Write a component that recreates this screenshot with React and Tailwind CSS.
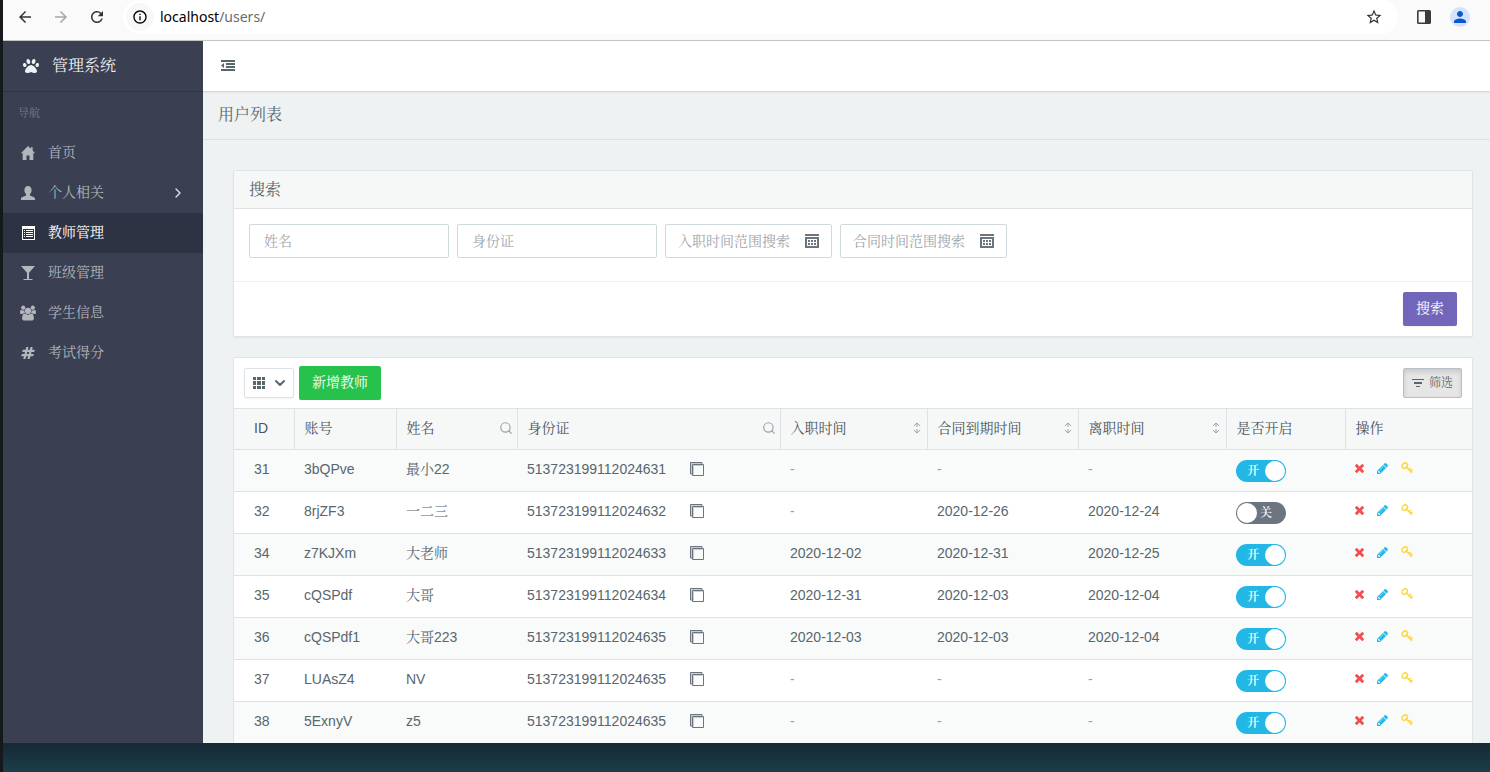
import { useState } from 'react';
import { MdArrowBack, MdArrowForward, MdRefresh, MdInfoOutline, MdStarBorder, MdPerson } from 'react-icons/md';
import { FaPaw } from 'react-icons/fa';
import { FiSearch, FiChevronDown, FiChevronRight } from 'react-icons/fi';

function HomeIcon() {
  return (
    <svg width="16" height="16" viewBox="0 0 16 16" fill="currentColor">
      <path d="M8 1L.8 8.300h1.900V15h3.800v-4.500h3V15h3.800V8.300h1.900L12.700 5.700V2.300h-1.900v1.500z" />
    </svg>
  );
}

function UserIcon() {
  return (
    <svg width="16" height="16" viewBox="0 0 16 16" fill="currentColor">
      <path d="M8 1C5.700 1 4.400 2.700 4.400 5c0 1.800.7 3.200 1.700 4.200v1.300L2 12.200c-.8.4-1 .9-1 1.600V15h14v-1.200c0-.7-.3-1.200-1-1.600l-4.100-1.700V9.200c1-1 1.700-2.400 1.700-4.200C11.600 2.700 10.300 1 8 1z" />
    </svg>
  );
}

function ListIcon() {
  return (
    <svg width="16" height="16" viewBox="0 0 16 16" fill="currentColor">
      <path fillRule="evenodd" d="M2 1h13v14H2zM3 4v10h11V4z" />
      <path d="M4 5h1v1H4zM6 5h7v1H6zM4 7h1v1H4zM6 7h7v1H6zM4 9h1v1H4zM6 9h7v1H6zM4 11h1v1H4zM6 11h7v1H6z" />
    </svg>
  );
}

function GlassIcon() {
  return (
    <svg width="16" height="16" viewBox="0 0 16 16" fill="currentColor">
      <path d="M1 1h14L9 7.800V14h3.500v1h-9v-1H7V7.800z" />
    </svg>
  );
}

function UsersIcon() {
  return (
    <svg width="16" height="16" viewBox="0 0 1920 1792" fill="currentColor">
      <path d="M593 896q-162 5-265 128H194q-82 0-138-40.500T0 865q0-353 124-353 6 0 43.500 21t97.500 42.500T384 597q67 0 133-23-5 37-5 66 0 139 81 256zm1071 637q0 120-73 189.500t-194 69.500H523q-121 0-194-69.500T256 1533q0-53 3.500-103.500t14-109T300 1212t43-97.500 62-81 85.500-53.500T602 960q10 0 43 21.500t73 48 107 48 135 21.500 135-21.500 107-48 73-48 43-21.500q61 0 111.500 20t85.500 53.500 62 81 43 97.500 26.500 108.500 14 109 3.500 103.500zM640 256q0 106-75 181t-181 75-181-75-75-181 75-181T384 0t181 75 75 181zm704 384q0 159-112.500 271.500T960 1024 688.500 911.500 576 640t112.500-271.500T960 256t271.500 112.500T1344 640zm576 225q0 78-56 118.500t-138 40.500h-134q-103-123-265-128 81-117 81-256 0-29-5-66 66 23 133 23 59 0 119-21.500t97.500-42.500 43.500-21q124 0 124 353zm-128-609q0 106-75 181t-181 75-181-75-75-181 75-181 181-75 181 75 75 181z" />
    </svg>
  );
}

function HashIcon() {
  return (
    <svg width="16" height="14" viewBox="0 0 1728 1792" fill="currentColor">
      <path d="M959 1024l64-256H769l-64 256h254zm768-504l-56 224q-7 24-31 24h-327l-64 256h311q15 0 25 12 10 14 6 28l-56 224q-5 24-31 24h-327l-81 328q-7 24-31 24H841q-16 0-26-12-9-12-6-28l78-312H633l-81 328q-7 24-31 24H296q-15 0-25-12-9-12-6-28l78-312H32q-15 0-25-12-9-12-6-28l56-224q7-24 31-24h327l64-256H168q-15 0-25-12-10-14-6-28l56-224q5-24 31-24h327l81-328q7-24 32-24h224q15 0 25 12 9 12 6 28l-78 312h254l81-328q7-24 32-24h224q15 0 25 12 9 12 6 28l-78 312h311q15 0 25 12 9 12 6 28z" />
    </svg>
  );
}

function OutdentIcon() {
  return (
    <svg width="14" height="12" viewBox="0 0 14 12" fill="currentColor">
      <path d="M0 0h14v2H0zM5 3h9v2H5zM5 6h9v2H5zM0 9h14v2H0zM3 3v5L0 5.500z" />
    </svg>
  );
}

function CalendarIcon() {
  return (
    <svg width="14" height="14" viewBox="0 0 14 14" fill="currentColor">
      <path d="M0 0h14v2H0z" />
      <path fillRule="evenodd" d="M0 3h14v11H0zM2 5v7h10V5z" />
      <path d="M3 6h2v2H3zM6 6h2v2H6zM9 6h2v2H9zM3 9h2v2H3zM6 9h2v2H6zM9 9h2v2H9z" />
    </svg>
  );
}

function GridIcon() {
  return (
    <svg width="12" height="12" viewBox="0 0 12 12" fill="currentColor">
      <path d="M0 0h3v3H0zM4 0h4v3H4zM9 0h3v3H9zM0 4h3v4H0zM4 4h4v4H4zM9 4h3v4H9zM0 9h3v3H0zM4 9h4v3H4zM9 9h3v3H9z" />
    </svg>
  );
}

function FilterIcon() {
  return (
    <svg width="12" height="9" viewBox="0 0 12 9" fill="currentColor">
      <path d="M0 0h12v1H0zM2 3h8v2H2zM4 7h4v1H4z" />
    </svg>
  );
}

function SortIcon() {
  return (
    <svg width="8" height="12" viewBox="0 0 8 12" fill="none" stroke="currentColor">
      <path d="M.8 4L4 1l3.200 3M4 1.500V5M.8 8L4 11l3.200-3M4 7v3.500" />
    </svg>
  );
}

function CopyIcon() {
  return (
    <svg width="14" height="14" viewBox="0 0 14 14" fill="none" stroke="currentColor">
      <path d="M12 2.500V.5H.5V12h2" />
      <path d="M2.500 2.500h11v11h-11z" />
      <path d="M1.500 11.500v-10h10M3.500 12.500v-9h9" opacity=".35" />
    </svg>
  );
}

function TimesIcon() {
  return (
    <svg width="9" height="9" viewBox="110 366 1188 1188" fill="currentColor">
      <path d="M1298 1322q0 40-28 68l-136 136q-28 28-68 28t-68-28L704 1232l-294 294q-28 28-68 28t-68-28l-136-136q-28-28-28-68t28-68l294-294-294-294q-28-28-28-68t28-68l136-136q28-28 68-28t68 28l294 294 294-294q28-28 68-28t68 28l136 136q28 28 28 68t-28 68l-294 294 294 294q28 28 28 68z" />
    </svg>
  );
}

function PencilIcon() {
  return (
    <svg width="11" height="11" viewBox="0 144 1520 1520" fill="currentColor">
      <path d="M363 1536l91-91-235-235-91 91v107h128v128h107zm523-928q0-22-22-22-10 0-17 7l-542 542q-7 7-7 17 0 22 22 22 10 0 17-7l542-542q7-7 7-17zm-54-192l416 416-832 832H0v-416zm683 96q0 53-37 90l-166 166-416-416 166-165q36-38 90-38 53 0 91 38l235 234q37 39 37 91z" />
    </svg>
  );
}

function KeyIcon() {
  return (
    <svg width="12" height="12" viewBox="0 0 12 12" fill="none" stroke="currentColor" strokeWidth="1.400">
      <ellipse cx="3.700" cy="3.600" rx="3" ry="2.300" transform="rotate(-40 3.700 3.600)" />
      <path d="M5.500 5.200L11 10.800M8 7.800l1.800-1.700M9.700 9.400l1.800-1.700" />
    </svg>
  );
}

function SidePanelIcon() {
  return (
    <svg width="16" height="16" viewBox="0 0 16 16" fill="#3c3c3c">
      <path fillRule="evenodd" d="M2.500 1h11A1.500 1.500 0 0 1 15 2.500v11a1.500 1.500 0 0 1-1.500 1.500h-11A1.500 1.500 0 0 1 1 13.500v-11A1.500 1.500 0 0 1 2.500 1zM2.600 2.600v10.800H9V2.600z" />
    </svg>
  );
}

const menu = [
  { label: '首页', Icon: HomeIcon },
  { label: '个人相关', Icon: UserIcon, children: true },
  { label: '教师管理', Icon: ListIcon, active: true },
  { label: '班级管理', Icon: GlassIcon },
  { label: '学生信息', Icon: UsersIcon },
  { label: '考试得分', Icon: HashIcon },
];

const columns = [
  { label: 'ID', width: 'w-[60px]' },
  { label: '账号', width: 'w-[102px]' },
  { label: '姓名', width: 'w-[121px]', search: true },
  { label: '身份证', width: 'w-[263px]', search: true },
  { label: '入职时间', width: 'w-[147px]', sort: true },
  { label: '合同到期时间', width: 'w-[151px]', sort: true },
  { label: '离职时间', width: 'w-[148px]', sort: true },
  { label: '是否开启', width: 'w-[119px]' },
  { label: '操作', width: 'w-auto' },
];

const teachers = [
  { id: 31, account: '3bQPve', name: '最小22', card: '513723199112024631', on: true },
  { id: 32, account: '8rjZF3', name: '一二三', card: '513723199112024632', end: '2020-12-26', leave: '2020-12-24', on: false },
  { id: 34, account: 'z7KJXm', name: '大老师', card: '513723199112024633', start: '2020-12-02', end: '2020-12-31', leave: '2020-12-25', on: true },
  { id: 35, account: 'cQSPdf', name: '大哥', card: '513723199112024634', start: '2020-12-31', end: '2020-12-03', leave: '2020-12-04', on: true },
  { id: 36, account: 'cQSPdf1', name: '大哥223', card: '513723199112024635', start: '2020-12-03', end: '2020-12-03', leave: '2020-12-04', on: true },
  { id: 37, account: 'LUAsZ4', name: 'NV', card: '513723199112024635', on: true },
  { id: 38, account: '5ExnyV', name: 'z5', card: '513723199112024635', on: true },
];

function BrowserBar() {
  return (
    <div className="flex h-[41px] shrink-0 items-center border-b border-[#c4c4c4] bg-[#fafafa] pb-[6px] pl-[13px] pr-5 text-lg text-[#333333]">
      <div className="flex gap-[18px]">
        <button aria-label="Back"><MdArrowBack /></button>
        <button aria-label="Forward" className="text-[#a6a6a6]"><MdArrowForward /></button>
        <button aria-label="Reload"><MdRefresh /></button>
      </div>
      <div className="ml-[17px] flex h-[34px] flex-1 items-center rounded-full bg-white pl-[3px] pr-[15px]">
        <span className="flex size-7 items-center justify-center rounded-full bg-[#f8f8f8] text-base text-black">
          <MdInfoOutline />
        </span>
        <span className="ml-[6px] flex-1 font-['Noto_Sans'] text-sm text-[#6b6b6b]">
          <span className="text-black">localhost</span>/users/
        </span>
        <button aria-label="Bookmark"><MdStarBorder /></button>
      </div>
      <button aria-label="Side panel" className="ml-[18px]"><SidePanelIcon /></button>
      <button aria-label="Profile" className="ml-[18px] flex size-5 items-center justify-center rounded-full bg-[#d3e3fd] text-[#0b57d0]">
        <MdPerson />
      </button>
    </div>
  );
}

function Sidebar() {
  return (
    <aside className="w-[200px] shrink-0 bg-[#3a3f51] text-[#b4b6bd]">
      <div className="flex h-[51px] items-center gap-[13px] border-b border-[#303546] pl-5 text-base text-[#f0f1f3]">
        <FaPaw className="size-4" />
        <span>管理系统</span>
      </div>
      <div className="flex h-[41px] items-center pl-[15px] pt-[2px] text-[11px] text-[#7b7f8c]">导航</div>
      <nav>
        {menu.map(({ label, Icon, active, children }) => (
          <a
            key={label}
            href="#"
            className={active
              ? 'flex h-10 items-center gap-3 bg-[#2e3344] pl-[17px] pr-[17px] text-sm text-white'
              : 'flex h-10 items-center gap-3 pl-[17px] pr-[17px] text-sm'}
          >
            <span className="flex w-4 justify-center"><Icon /></span>
            <span className="flex-1 pb-[2px]">{label}</span>
            {children && <FiChevronRight className="size-4 text-[#e0e1e4]" />}
          </a>
        ))}
      </nav>
    </aside>
  );
}

function DateRange({ placeholder }) {
  return (
    <label className="flex h-[34px] w-[167px] items-center justify-between rounded-[2px] border border-[#cfdadd] px-3 text-[#6b747f]">
      <input
        placeholder={placeholder}
        aria-label={placeholder}
        className="w-[116px] text-sm outline-none placeholder:text-[#9fa6ad]"
      />
      <CalendarIcon />
    </label>
  );
}

function SearchPanel() {
  const box = 'h-[34px] w-[200px] rounded-[2px] border border-[#cfdadd] px-[14px] text-sm outline-none placeholder:text-[#a2a8ae]';
  return (
    <form className="rounded-[2px] border border-[#dee5e7] bg-white shadow-xs" onSubmit={(e) => e.preventDefault()}>
      <h2 className="flex h-[38px] items-center border-b border-[#dee2e6] bg-[#f6f8f8] px-[15px] text-base">搜索</h2>
      <div className="flex flex-wrap gap-2 px-[15px] pb-[23px] pt-[15px]">
        <input placeholder="姓名" aria-label="姓名" className={box} />
        <input placeholder="身份证" aria-label="身份证" className={box} />
        <DateRange placeholder="入职时间范围搜索" />
        <DateRange placeholder="合同时间范围搜索" />
      </div>
      <div className="flex justify-end border-t border-[#edf1f2] px-[15px] py-[10px]">
        <button type="submit" className="h-[34px] rounded-[2px] bg-[#7266ba] px-[13px] pb-[2px] text-sm text-white shadow-xs">搜索</button>
      </div>
    </form>
  );
}

function Toggle({ id, initial }) {
  const [on, setOn] = useState(initial);
  return (
    <label className="block w-[50px] cursor-pointer font-semibold">
      <input
        type="checkbox"
        className="sr-only"
        aria-label={`是否开启 ${id}`}
        checked={on}
        onChange={() => setOn(!on)}
      />
      <span className={on
        ? 'flex h-[22px] items-center justify-end gap-[6px] rounded-full bg-[#23b7e5] p-px text-xs text-white'
        : 'flex h-[22px] flex-row-reverse items-center justify-end gap-[3px] rounded-full bg-[#6b747f] p-px text-xs text-white'}
      >
        <span>{on ? '开' : '关'}</span>
        <span className="size-5 rounded-full bg-white" />
      </span>
    </label>
  );
}

function TeacherRow({ row }) {
  const cell = 'px-[10px] pb-[3px]';
  const date = (v) => v || <span className="text-[#98a0a6]">-</span>;
  return (
    <tr className="h-[42px] border-b border-[#dee2e6] odd:bg-[#f9fafa]">
      <td className="pb-[3px] pl-5">{row.id}</td>
      <td className={cell}>{row.account}</td>
      <td className={cell}>{row.name}</td>
      <td className={cell}>
        <span className="flex items-center gap-6">
          {row.card}
          <button aria-label="复制" className="text-[#6b747f]"><CopyIcon /></button>
        </span>
      </td>
      <td className={cell}>{date(row.start)}</td>
      <td className={cell}>{date(row.end)}</td>
      <td className={cell}>{date(row.leave)}</td>
      <td className="px-[10px]"><Toggle id={row.id} initial={row.on} /></td>
      <td className="px-[10px] pb-[5px]">
        <span className="flex items-center gap-[13px]">
          <button aria-label="删除" className="text-[#f05050]"><TimesIcon /></button>
          <button aria-label="编辑" className="text-[#23b7e5]"><PencilIcon /></button>
          <button aria-label="重置密码" className="text-[#fad733]"><KeyIcon /></button>
        </span>
      </td>
    </tr>
  );
}

function TeacherPanel() {
  return (
    <section className="rounded-[2px] border border-[#dee5e7] bg-white">
      <div className="flex h-[50px] items-center gap-[5px] px-[10px]">
        <button aria-label="显示列" className="flex h-[30px] w-[50px] items-center gap-[7px] rounded-[2px] border border-[#dee2e6] pl-2 text-[#58666e] shadow-xs">
          <GridIcon />
          <FiChevronDown className="size-4" strokeWidth="3" />
        </button>
        <button className="h-[34px] rounded-[2px] bg-[#27c24c] px-[13px] pb-[2px] text-sm text-white">新增教师</button>
        <button className="ml-auto flex h-[30px] items-center gap-[5px] rounded-[2px] border border-[#b6bec6] bg-[#e6e6e6] px-2 text-xs text-[#58666e] shadow-[inset_0_3px_5px_rgba(0,0,0,0.125)]">
          <FilterIcon />
          筛选
        </button>
      </div>
      <table className="w-full table-fixed border-collapse text-left text-sm text-[#58666e]">
        <thead>
          <tr className="h-[41px] border-y border-[#dee2e6] bg-[#f6f8f8] text-[#4d565d]">
            {columns.map((c) => (
              <th key={c.label} className={`${c.width} border-r border-[#dee2e6] pb-[2px] pl-[10px] pr-[9px] font-normal first:pl-5 last:border-r-0`}>
                <span className="flex items-center justify-between">
                  {c.label}
                  {c.search && <FiSearch className="-mr-[5px] size-[14px] text-[#98a3aa]" />}
                  {c.sort && <span className="-mr-[3px] text-[#98a3aa]"><SortIcon /></span>}
                </span>
              </th>
            ))}
          </tr>
        </thead>
        <tbody>
          {teachers.map((row) => <TeacherRow key={row.id} row={row} />)}
        </tbody>
      </table>
    </section>
  );
}

export default function App() {
  return (
    <div className="flex h-screen flex-col bg-[#1b3642] font-['Liberation_Sans','Noto_Serif_CJK_SC','Noto_Sans_CJK_SC',sans-serif] text-[#58666e]">
      <div className="flex min-h-0 flex-1 flex-col border-l-[3px] border-[#15191c]">
        <BrowserBar />
        <div className="flex min-h-0 flex-1">
          <Sidebar />
          <main className="flex min-w-0 flex-1 flex-col overflow-hidden bg-[#eef2f3]">
            <header className="z-10 flex h-[51px] shrink-0 items-center border-b border-[#d5d9dc] bg-white pl-[18px] shadow-xs">
              <button aria-label="收起菜单"><OutdentIcon /></button>
            </header>
            <h1 className="flex h-12 shrink-0 items-center border-b border-[#dee2e6] px-[15px] pb-[2px] text-base">用户列表</h1>
            <div className="flex flex-col gap-5 pb-5 pl-[30px] pr-[17px] pt-[30px]">
              <SearchPanel />
              <TeacherPanel />
            </div>
          </main>
        </div>
      </div>
      <div className="h-[29px] shrink-0 border-l-[3px] border-[#15191c] bg-linear-to-b from-[#152a34] to-[#1c3d49]" />
    </div>
  );
}
